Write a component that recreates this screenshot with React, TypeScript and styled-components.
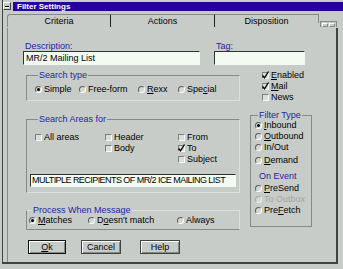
import styled, { createGlobalStyle } from "styled-components";

const BG = "#c8ccc8";
const BLUE = "#1e1ea4";
const DARK = "#404440";
const SHADE = "#868a86";
const FAINT = "#dde1dd";

const GlobalStyle = createGlobalStyle`
  html, body { margin: 0; padding: 0; background: ${BG}; overflow: hidden; }
  body {
    font-family: "Liberation Sans", Arial, sans-serif;
    font-size: 9px;
    color: #000;
  }
  * { box-sizing: border-box; }
`;

const Window = styled.div`
  width: 336px;
  height: 264px;
  margin-left: 2px;
  border-left: 1px solid ${DARK};
  border-bottom: 2px solid ${DARK};
  display: flex;
  flex-direction: column;
`;

const TitleRow = styled.div`
  display: flex;
  gap: 2px;
  padding-top: 2px;
  width: 340px;
  height: 11px;
  flex: none;
`;

const SysButton = styled.div`
  width: 8px;
  height: 8px;
  border: 1px solid;
  border-color: #fff ${DARK} ${DARK} #fff;
  display: flex;
  align-items: center;
  justify-content: center;
  &::after {
    content: "";
    width: 4px;
    height: 1px;
    background: #000;
    box-shadow: 0 1px #fff;
  }
`;

const TitleBar = styled.div`
  flex: 1;
  height: 9px;
  background: #2800a0;
  color: #fff;
  font-weight: bold;
  font-size: 8px;
  line-height: 9px;
  padding-left: 4px;
`;

const Notebook = styled.div`
  margin: 3px 0 0 4px;
  width: 331px;
  flex: 1;
  display: flex;
  flex-direction: column;
`;

const TabRow = styled.div`
  display: flex;
  height: 14px;
  flex: none;
`;

const Tab = styled.div<{ $first?: boolean; $last?: boolean }>`
  width: 104px;
  border-top: 1px solid ${SHADE};
  border-left: ${(p) => (p.$first ? `1px solid ${SHADE}` : "none")};
  border-top-left-radius: ${(p) => (p.$first ? "3px" : "0")};
  border-right: 1px solid ${(p) => (p.$last ? SHADE : "#202420")};
  text-align: center;
  line-height: 12px;
  height: ${(p) => (p.$last ? "9px" : "13px")};
  overflow: visible;
  white-space: nowrap;
`;

const TabLabel = styled.span`
  display: block;
  line-height: 12px;
  height: 13px;
`;

const PageArrows = styled.div`
  margin: 7px 0 0 1px;
  width: 17px;
  height: 6px;
  border: 1px solid ${SHADE};
  border-bottom: none;
  display: flex;
  gap: 1px;
  padding: 1px 1px 0;
`;

const ArrowKey = styled.span`
  flex: 1;
  height: 4px;
  border: 1px solid;
  border-color: #fff ${SHADE} ${SHADE} #fff;
`;

const Page = styled.div`
  flex: 1;
  border-left: 1px solid ${SHADE};
  border-right: 2px solid ${DARK};
  padding: 13px 0 0 15px;
  display: flex;
  flex-direction: column;
`;

const FieldRow = styled.div`
  display: flex;
  gap: 14px;
`;

const Field = styled.div<{ $w: number }>`
  width: ${(p) => p.$w}px;
  display: flex;
  flex-direction: column;
`;

const Label = styled.div`
  color: ${BLUE};
  line-height: 10px;
  height: 10px;
  margin-left: 2px;
`;

const Entry = styled.div<{ $w?: number; $h?: number; $tight?: boolean }>`
  width: ${(p) => (p.$w ? `${p.$w}px` : "100%")};
  height: ${(p) => p.$h ?? 14}px;
  background: #f2faf2;
  border: 1px solid;
  border-color: #303430 #f4f8f4 #f4f8f4 #303430;
  padding-left: ${(p) => (p.$tight ? 1 : 2)}px;
  line-height: ${(p) => (p.$h ?? 14) - 2}px;
  letter-spacing: ${(p) => (p.$tight ? "-0.55px" : "normal")};
  white-space: nowrap;
  overflow: hidden;
`;

const AreaEntry = styled(Entry)`
  margin: 9px 0 0 -5px;
`;

const Body = styled.div`
  display: grid;
  grid-template-columns: 214px 62px;
  column-gap: 10px;
  margin: 5px 0 0 3px;
`;

const Column = styled.div`
  display: flex;
  flex-direction: column;
`;

const Group = styled.fieldset<{ $edges: string; $mt?: number; $pad: string }>`
  margin: ${(p) => p.$mt ?? 0}px 0 0;
  padding: ${(p) => p.$pad};
  min-width: 0;
  border: 1px solid ${FAINT};
  border-top-color: ${(p) => (p.$edges.includes("t") ? SHADE : FAINT)};
  border-right-color: ${(p) => (p.$edges.includes("r") ? SHADE : FAINT)};
  border-bottom-color: ${(p) => (p.$edges.includes("b") ? SHADE : FAINT)};
  border-left-color: ${(p) => (p.$edges.includes("l") ? SHADE : FAINT)};
`;

const Legend = styled.legend`
  padding: 0 1px;
  margin-left: 3px;
  color: ${BLUE};
  line-height: 10px;
  height: 10px;
`;

const OptionGrid = styled.div<{ $cols: string }>`
  display: grid;
  grid-template-columns: ${(p) => p.$cols};
`;

const Stack = styled.div<{ $indent?: number }>`
  display: flex;
  flex-direction: column;
  padding-left: ${(p) => p.$indent ?? 0}px;
`;

const Option = styled.label<{ $dim?: boolean; $mt?: number }>`
  display: flex;
  align-items: center;
  gap: 2px;
  height: 11px;
  line-height: 11px;
  margin-top: ${(p) => p.$mt ?? 0}px;
  white-space: nowrap;
  color: ${(p) => (p.$dim ? "#a2a6a2" : "#000")};
`;

const Dot = styled.span<{ $on?: boolean; $dim?: boolean }>`
  width: 7px;
  height: 7px;
  flex: none;
  border-radius: 50%;
  border: 1px solid;
  border-color: ${(p) => (p.$dim ? "#a8aca8 #eef2ee #eef2ee #a8aca8" : "#5c605c #fff #fff #5c605c")};
  background: #d4d8d4;
  display: inline-flex;
  align-items: center;
  justify-content: center;
  &::after {
    content: "";
    width: 3px;
    height: 3px;
    border-radius: 50%;
    background: ${(p) => (p.$on ? "#000" : "transparent")};
  }
`;

const Box = styled.span`
  width: 7px;
  height: 7px;
  flex: none;
  border: 1px solid;
  border-color: #7c807c #f8fcf8 #f8fcf8 #7c807c;
  background: #dadeda;
  display: inline-flex;
  align-items: center;
  justify-content: center;
  overflow: visible;
`;

const U = styled.span`
  text-decoration: underline;
`;

const SubLabel = styled.div`
  color: ${BLUE};
  height: 11px;
  line-height: 11px;
  margin: 5px 0 1px 4px;
`;

const ButtonRow = styled.div`
  display: flex;
  margin: 10px 0 0 5px;
`;

const Button = styled.button<{ $w: number; $ml?: number; $default?: boolean }>`
  width: ${(p) => p.$w}px;
  height: 14px;
  margin-left: ${(p) => p.$ml ?? 0}px;
  padding: 0;
  font: inherit;
  line-height: 12px;
  color: #000;
  background: ${BG};
  border: 1px solid ${(p) => (p.$default ? "#101410" : "#404440")};
  box-shadow: inset 1px 1px #fff, inset -1px -1px ${SHADE};
`;

const Check = ({ on }: { on?: boolean }) => (
  <Box>
    {on && (
      <svg width="7" height="7" viewBox="0 0 7 7" style={{ overflow: "visible" }}>
        <path d="M0.5 3.5 L2.5 5.8 L6.5 -0.5" fill="none" stroke="#000" strokeWidth="1.3" />
      </svg>
    )}
  </Box>
);

const Radio = ({ on, dim, mt, children }: { on?: boolean; dim?: boolean; mt?: number; children: React.ReactNode }) => (
  <Option $dim={dim} $mt={mt}>
    <Dot $on={on} $dim={dim} />
    <span>{children}</span>
  </Option>
);

const CheckOpt = ({ on, children }: { on?: boolean; children: React.ReactNode }) => (
  <Option>
    <Check on={on} />
    <span>{children}</span>
  </Option>
);

export default function App() {
  return (
    <>
      <GlobalStyle />
      <Window>
        <TitleRow>
          <SysButton />
          <TitleBar>Filter Settings</TitleBar>
        </TitleRow>
        <Notebook>
          <TabRow>
            <Tab $first>
              <TabLabel>Criteria</TabLabel>
            </Tab>
            <Tab>
              <TabLabel>Actions</TabLabel>
            </Tab>
            <Tab $last>
              <TabLabel>Disposition</TabLabel>
            </Tab>
            <PageArrows>
              <ArrowKey />
              <ArrowKey />
            </PageArrows>
          </TabRow>
          <Page>
            <FieldRow>
              <Field $w={177}>
                <Label>Description:</Label>
                <Entry>MR/2 Mailing List</Entry>
              </Field>
              <Field $w={91}>
                <Label>Tag:</Label>
                <Entry />
              </Field>
            </FieldRow>
            <Body>
              <Column>
                <Group $edges="tl" $pad="4px 0 5px 8px">
                  <Legend>Search type</Legend>
                  <OptionGrid $cols="44px 59px 40px auto">
                    <Radio on>Simple</Radio>
                    <Radio>Free-form</Radio>
                    <Radio>
                      <U>R</U>exx
                    </Radio>
                    <Radio>
                      Spe<U>c</U>ial
                    </Radio>
                  </OptionGrid>
                </Group>
                <Group $edges="tl" $mt={13} $pad="8px 0 5px 8px">
                  <Legend>Search Areas for</Legend>
                  <OptionGrid $cols="70px 73px auto">
                    <Stack>
                      <CheckOpt>All areas</CheckOpt>
                    </Stack>
                    <Stack>
                      <CheckOpt>Header</CheckOpt>
                      <CheckOpt>Body</CheckOpt>
                    </Stack>
                    <Stack>
                      <CheckOpt>From</CheckOpt>
                      <CheckOpt on>To</CheckOpt>
                      <CheckOpt>Subject</CheckOpt>
                    </Stack>
                  </OptionGrid>
                  <AreaEntry $w={206} $h={13} $tight>
                    MULTIPLE RECIPIENTS OF MR/2 ICE MAILING LIST
                  </AreaEntry>
                </Group>
                <Group $edges="lb" $mt={12} $pad="0 0 3px 2px">
                  <Legend>Process When Message</Legend>
                  <OptionGrid $cols="59px 89px auto">
                    <Radio on>
                      <U>M</U>atches
                    </Radio>
                    <Radio>
                      D<U>o</U>esn't match
                    </Radio>
                    <Radio>Always</Radio>
                  </OptionGrid>
                </Group>
              </Column>
              <Column>
                <Stack $indent={12}>
                  <CheckOpt on>
                    <U>E</U>nabled
                  </CheckOpt>
                  <CheckOpt on>
                    <U>M</U>ail
                  </CheckOpt>
                  <CheckOpt>News</CheckOpt>
                </Stack>
                <Group $edges="tlrb" $mt={7} $pad="0 0 10px 4px">
                  <Legend>Filter Type</Legend>
                  <Radio on>
                    <U>I</U>nbound
                  </Radio>
                  <Radio>
                    <U>O</U>utbound
                  </Radio>
                  <Radio>In/Out</Radio>
                  <Radio mt={2}>
                    <U>D</U>emand
                  </Radio>
                  <SubLabel>On Event</SubLabel>
                  <Radio>
                    <U>P</U>reSend
                  </Radio>
                  <Radio dim>To Outbox</Radio>
                  <Radio>
                    Pre<U>F</U>etch
                  </Radio>
                </Group>
              </Column>
            </Body>
            <ButtonRow>
              <Button $w={38} $default>
                <U>O</U>k
              </Button>
              <Button $w={40} $ml={15}>
                Cancel
              </Button>
              <Button $w={40} $ml={19}>
                Help
              </Button>
            </ButtonRow>
          </Page>
        </Notebook>
      </Window>
    </>
  );
}
